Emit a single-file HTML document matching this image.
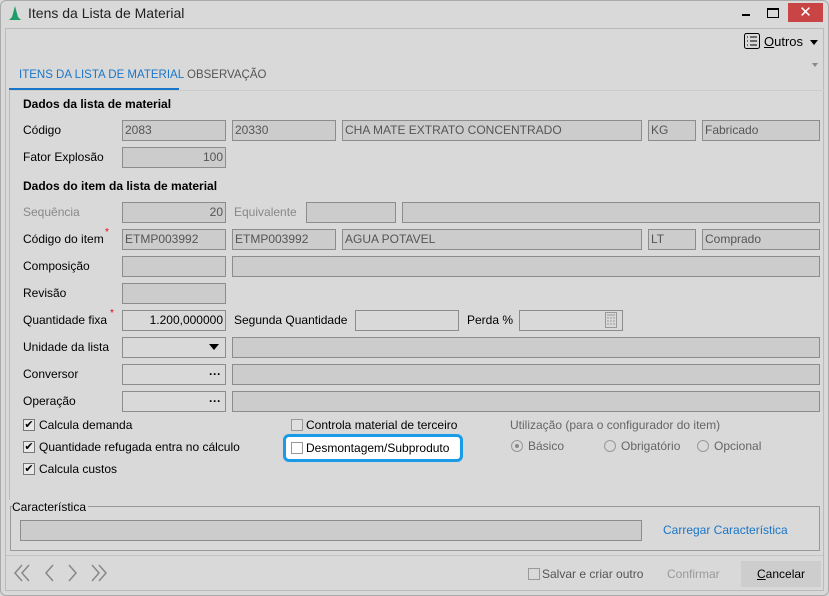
<!DOCTYPE html>
<html><head><meta charset="utf-8"><style>
*{box-sizing:border-box;margin:0;padding:0}
body{width:829px;height:596px;background:#d9d9d9;font-family:"Liberation Sans",sans-serif;font-size:12px;color:#000;position:relative;overflow:hidden}
.a{position:absolute;white-space:nowrap}
.f{position:absolute;height:21px;border:1px solid #8c8c8c;background:#cccccc;color:#555;font-size:12px;line-height:18px;padding:0 2px;overflow:hidden;white-space:nowrap}
.e{background:#d9d9d9}
.r{text-align:right}
.l{position:absolute;font-size:12px;white-space:nowrap}
.st{position:absolute;color:#e00;font-size:10px}
.cb{position:absolute;width:12px;height:12px;border:1px solid #777;background:#e8e8e8;font-size:11px;line-height:10px;text-align:center}
.rad{position:absolute;width:12px;height:12px;border:1px solid #999;border-radius:50%}
</style></head><body>
<div class="a" style="left:0;top:0;width:829px;height:596px;border:1px solid #aaa;border-radius:6px"></div>
<svg class="a" style="left:9px;top:6px" width="12" height="14"><path d="M6 0 L9 11 L12 14 L0 14 L3 11Z" fill="#1f9c6a"/></svg>
<div class="a" style="left:28px;top:5px;font-size:14px;color:#222">Itens da Lista de Material</div>
<div class="a" style="left:742px;top:14px;width:8px;height:2px;background:#000"></div>
<div class="a" style="left:767px;top:8px;width:12px;height:10px;border:1px solid #000;border-top-width:2px"></div>
<div class="a" style="left:788px;top:3px;width:35px;height:19px;background:#c94545;color:#fff;text-align:center;font-size:15px;line-height:19px">✕</div>
<div class="a" style="left:5px;top:28px;width:819px;height:563px;border:1px solid #bbb"></div>
<svg class="a" style="left:744px;top:33px" width="16" height="16"><rect x="0.5" y="0.5" width="15" height="15" rx="2" fill="none" stroke="#000"/><path d="M3 4h1M3 8h1M3 12h1M6 4h7M6 8h7M6 12h7" stroke="#000"/></svg>
<div class="a" style="left:764px;top:34px;font-size:13px"><u>O</u>utros</div>
<div class="a" style="left:810px;top:40px;border:4px solid transparent;border-top:5px solid #000"></div>
<div class="a" style="left:812px;top:63px;border:3px solid transparent;border-top:4px solid #888"></div>
<div class="a" style="left:19px;top:69px;color:#1a76c8;font-size:11.5px">ITENS DA LISTA DE MATERIAL</div>
<div class="a" style="left:187px;top:69px;color:#555;font-size:11.5px">OBSERVAÇÃO</div>
<div class="a" style="left:9px;top:88px;width:170px;height:2px;background:#1a76c8"></div>
<div class="a" style="left:9px;top:90px;width:815px;height:410px;border-left:1px solid #bbb;border-top:1px solid #ccc"></div>
<div class="a" style="left:23px;top:97px;font-weight:bold">Dados da lista de material</div>
<div class="l" style="left:23px;top:123px">Código</div>
<div class="f" style="left:122px;top:120px;width:104px">2083</div>
<div class="f" style="left:232px;top:120px;width:104px">20330</div>
<div class="f" style="left:342px;top:120px;width:300px">CHA MATE EXTRATO CONCENTRADO</div>
<div class="f" style="left:648px;top:120px;width:48px">KG</div>
<div class="f" style="left:702px;top:120px;width:118px">Fabricado</div>
<div class="l" style="left:23px;top:150px">Fator Explosão</div>
<div class="f r" style="left:122px;top:147px;width:104px">100</div>
<div class="a" style="left:23px;top:179px;font-weight:bold">Dados do item da lista de material</div>
<div class="l" style="left:23px;top:205px;color:#888">Sequência</div>
<div class="f r" style="left:122px;top:202px;width:104px">20</div>
<div class="l" style="left:234px;top:205px;color:#888">Equivalente</div>
<div class="f" style="left:306px;top:202px;width:90px"></div>
<div class="f" style="left:402px;top:202px;width:418px"></div>
<div class="l" style="left:23px;top:232px">Código do item</div><div class="st" style="left:105px;top:227px">*</div>
<div class="f" style="left:122px;top:229px;width:104px">ETMP003992</div>
<div class="f" style="left:232px;top:229px;width:104px">ETMP003992</div>
<div class="f" style="left:342px;top:229px;width:300px">AGUA POTAVEL</div>
<div class="f" style="left:648px;top:229px;width:48px">LT</div>
<div class="f" style="left:702px;top:229px;width:118px">Comprado</div>
<div class="l" style="left:23px;top:259px">Composição</div>
<div class="f" style="left:122px;top:256px;width:104px"></div>
<div class="f" style="left:232px;top:256px;width:588px"></div>
<div class="l" style="left:23px;top:286px">Revisão</div>
<div class="f" style="left:122px;top:283px;width:104px"></div>
<div class="l" style="left:23px;top:313px">Quantidade fixa</div><div class="st" style="left:110px;top:308px">*</div>
<div class="f e r" style="left:122px;top:310px;width:104px;color:#000">1.200,000000</div>
<div class="l" style="left:234px;top:313px">Segunda Quantidade</div>
<div class="f e" style="left:355px;top:310px;width:104px"></div>
<div class="l" style="left:467px;top:313px">Perda %</div>
<div class="f e" style="left:519px;top:310px;width:104px"></div>
<svg class="a" style="left:605px;top:312px" width="12" height="16"><rect x="0.5" y="0.5" width="11" height="15" fill="none" stroke="#999"/><path d="M2 3h8M2 6h2M5 6h2M8 6h2M2 9h2M5 9h2M8 9h2M2 12h2M5 12h2M8 12h2" stroke="#999"/></svg>
<div class="l" style="left:23px;top:340px">Unidade da lista</div>
<div class="f e" style="left:122px;top:337px;width:104px"></div>
<div class="a" style="left:209px;top:344px;border:5px solid transparent;border-top:6px solid #000"></div>
<div class="f" style="left:232px;top:337px;width:588px"></div>
<div class="l" style="left:23px;top:367px">Conversor</div>
<div class="f e" style="left:122px;top:364px;width:104px"></div>
<div class="a" style="left:209px;top:367px;font-weight:bold">···</div>
<div class="f" style="left:232px;top:364px;width:588px"></div>
<div class="l" style="left:23px;top:394px">Operação</div>
<div class="f e" style="left:122px;top:391px;width:104px"></div>
<div class="a" style="left:209px;top:394px;font-weight:bold">···</div>
<div class="f" style="left:232px;top:391px;width:588px"></div>
<div class="cb" style="left:23px;top:419px">✔</div><div class="l" style="left:39px;top:418px">Calcula demanda</div>
<div class="cb" style="left:23px;top:441px">✔</div><div class="l" style="left:39px;top:440px">Quantidade refugada entra no cálculo</div>
<div class="cb" style="left:23px;top:463px">✔</div><div class="l" style="left:39px;top:462px">Calcula custos</div>
<div class="cb" style="left:291px;top:419px;background:#e0e0e0;border-color:#999"></div><div class="l" style="left:306px;top:418px">Controla material de terceiro</div>
<div class="a" style="left:283px;top:434px;width:180px;height:28px;border:3px solid #1a9be8;border-radius:6px;background:#fff"></div>
<div class="cb" style="left:291px;top:442px;background:#fff;border-color:#999"></div><div class="l" style="left:306px;top:441px">Desmontagem/Subproduto</div>
<div class="l" style="left:510px;top:418px;color:#666">Utilização (para o configurador do item)</div>
<div class="rad" style="left:511px;top:440px"></div><div class="a" style="left:515px;top:444px;width:4px;height:4px;background:#888;border-radius:50%"></div>
<div class="l" style="left:528px;top:439px;color:#666">Básico</div>
<div class="rad" style="left:604px;top:440px"></div><div class="l" style="left:621px;top:439px;color:#666">Obrigatório</div>
<div class="rad" style="left:697px;top:440px"></div><div class="l" style="left:714px;top:439px;color:#666">Opcional</div>
<div class="a" style="left:10px;top:506px;width:810px;height:45px;border:1px solid #999"></div>
<div class="a" style="left:12px;top:500px;background:#d9d9d9;padding-right:2px">Característica</div>
<div class="f" style="left:20px;top:520px;width:622px"></div>
<div class="l" style="left:663px;top:523px;color:#1a76c8">Carregar Característica</div>
<div class="a" style="left:6px;top:555px;width:817px;height:1px;background:#c4c4c4"></div>
<svg class="a" style="left:14px;top:564px" width="96" height="18" fill="none" stroke="#888" stroke-width="1.5"><path d="M8 1L1 9L8 17M15 1L8 9L15 17M39 1L32 9L39 17M55 1L62 9L55 17M78 1L85 9L78 17M85 1L92 9L85 17"/></svg>
<div class="cb" style="left:528px;top:568px;background:#d9d9d9;border-color:#999"></div>
<div class="l" style="left:542px;top:567px;color:#555">Salvar e criar outro</div>
<div class="l" style="left:667px;top:567px;color:#999">Confirmar</div>
<div class="a" style="left:741px;top:561px;width:80px;height:26px;background:#cdcdcd"></div>
<div class="l" style="left:757px;top:567px"><u>C</u>ancelar</div>
</body></html>
